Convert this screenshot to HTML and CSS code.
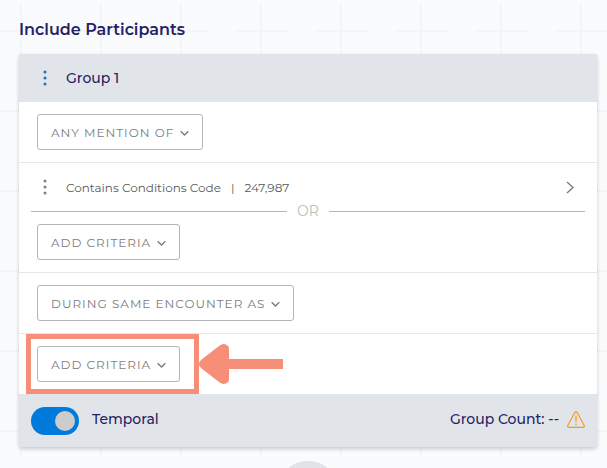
FILE: index.html
```html
<!DOCTYPE html>
<html lang="en">
<head>
    <meta charset="utf-8">
    <title>Include Participants</title>
    <link rel="stylesheet" href="styles.css">
</head>
<body>
    <main class="builder">
        <h2 class="title">Include Participants</h2>

        <section class="group">
            <header class="group-header">
                <button type="button" class="menu menu-blue" aria-label="Group menu">
                    <svg width="4" height="16" viewBox="0 0 4 16"><circle cx="2" cy="2" r="1.5"/><circle cx="2" cy="8" r="1.5"/><circle cx="2" cy="14" r="1.5"/></svg>
                </button>
                <h3 class="group-name">Group 1</h3>
            </header>

            <div class="row">
                <button type="button" class="drop">ANY MENTION OF
                    <svg class="chevron" width="9" height="8" viewBox="0 0 9 8"><path d="M.7 3.2l3.8 3.8 3.8-3.8"/></svg>
                </button>
            </div>

            <div class="row row-items">
                <div class="item">
                    <button type="button" class="menu" aria-label="Criteria menu">
                        <svg width="4" height="16" viewBox="0 0 4 16"><circle cx="2" cy="2" r="1.5"/><circle cx="2" cy="8" r="1.5"/><circle cx="2" cy="14" r="1.5"/></svg>
                    </button>
                    <span>Contains Conditions Code</span>
                    <span class="bar">|</span>
                    <span>247,987</span>
                    <button type="button" class="open" aria-label="Open criteria">
                        <svg class="chevron" width="8" height="13" viewBox="0 0 8 13"><path d="M1 1l6 5.5-6 5.5"/></svg>
                    </button>
                </div>
                <div class="or">OR</div>
                <button type="button" class="drop">ADD CRITERIA
                    <svg class="chevron" width="9" height="8" viewBox="0 0 9 8"><path d="M.7 3.2l3.8 3.8 3.8-3.8"/></svg>
                </button>
            </div>

            <div class="row">
                <button type="button" class="drop">DURING SAME ENCOUNTER AS
                    <svg class="chevron" width="9" height="8" viewBox="0 0 9 8"><path d="M.7 3.2l3.8 3.8 3.8-3.8"/></svg>
                </button>
            </div>

            <div class="row row-last">
                <div class="highlight">
                    <button type="button" class="drop">ADD CRITERIA
                        <svg class="chevron" width="9" height="8" viewBox="0 0 9 8"><path d="M.7 3.2l3.8 3.8 3.8-3.8"/></svg>
                    </button>
                </div>
                <svg class="arrow" width="84" height="40" viewBox="0 0 84 40"><path d="M2 16L20 2Q25-2 29 2Q30 3 30 5V15H84V25H30V35Q30 37 29 38Q25 42 20 38L2 24Q-2 20 2 16Z"/></svg>
            </div>

            <footer class="group-footer">
                <input type="checkbox" id="temporal" class="switch" checked>
                <label for="temporal">Temporal</label>
                <span class="count">Group Count: --</span>
                <svg class="warning" width="18" height="17" viewBox="0 0 18 17"><path d="M8 1.3Q9 0 10 1.3L17.2 14.5Q17.8 16.2 16 16.3H2Q.2 16.2.8 14.5Z"/><path class="mark" d="M9 4.5v6.5M9 12.5v2"/></svg>
            </footer>
        </section>

        <div class="next"></div>
    </main>
</body>
</html>
```
FILE: styles.css
```css
* { box-sizing: border-box; }
body {
    margin: 0;
    min-height: 100vh;
    font-family: Montserrat, Inter, sans-serif;
    color: #262262;
    background: #fafbfd url("data:image/svg+xml,%3Csvg xmlns='http://www.w3.org/2000/svg' width='80' height='80'%3E%3Cpath d='M40 13v53M13 40h54' stroke='%23f4f5f7' stroke-width='2'/%3E%3C/svg%3E") -19px -9px;
}
button { font: inherit; color: inherit; background: none; border: 0; padding: 0; }
svg { display: block; flex: none; }

.builder { padding: 18px 10px 0 19px; }
.title { margin: 0 0 12px; font-size: 16px; font-weight: 600; line-height: 24px; }

.group { background: #fff; border-radius: 0 0 3px 3px; box-shadow: 0 2px 4px rgba(0, 0, 0, 0.2); }
.group-header { display: flex; align-items: center; height: 48px; padding: 0 18px; background: #e1e5ea; }
.group-name { margin: 0; font-size: 14px; font-weight: 500; line-height: 20px; }
.menu { width: 16px; margin-right: 13px; fill: #808080; }
.menu svg { margin: 0 auto; }
.menu-blue { fill: #216fb4; }

.row { padding: 12px 18px; border-bottom: 1px solid #e7e7e7; }
.row-items { padding-top: 8px; }
.drop {
    display: flex;
    align-items: center;
    gap: 6px;
    height: 36px;
    padding: 0 13px;
    border: 1px solid #b5b5b5;
    border-radius: 3px;
    background: #fff;
    color: #7c7c7c;
    font-size: 12px;
    letter-spacing: 1px;
    white-space: nowrap;
}
.chevron { fill: none; stroke: #7c7c7c; stroke-width: 1.4; }

.item { display: flex; align-items: center; height: 32px; color: #5a5a5a; font-size: 12px; }
.bar { margin: 0 10px; }
.open { margin-left: auto; padding: 0 5px; }
.or { display: flex; align-items: center; gap: 10px; height: 16px; margin: 0 -6px 5px; color: #bdbdbd; font-size: 14px; }
.or::before, .or::after { content: ""; flex: 1; height: 1px; background: #b5b5b5; }

.row-last { display: flex; align-items: center; padding: 0 7px; border-bottom: 0; }
.highlight { padding: 7px 14px 7px 6px; border: 5px solid #f78e78; }
.arrow { fill: #f78e78; }

.group-footer { display: flex; align-items: center; height: 53px; padding: 0 12px; background: #e1e5ea; font-size: 14px; font-weight: 500; line-height: 20px; }
.group-footer label, .count { padding-bottom: 4px; }
.switch { appearance: none; width: 48px; height: 28px; margin: 0 13px 0 0; padding: 4px; border-radius: 14px; background: #ccc; }
.switch::before { content: ""; display: block; width: 20px; height: 20px; border-radius: 50%; background: #fff; }
.switch:checked { background: #007bdb; }
.switch:checked::before { margin-left: auto; background: #ccc; }
.count { margin-left: auto; }
.warning { margin: 0 0 2px 8px; fill: none; stroke: #f59b23; stroke-width: 1.2; }
.warning .mark { stroke: #f5b565; stroke-width: 2; }

.next { width: 64px; height: 64px; margin: 14px auto 0; border-radius: 50%; background: #e1e3e8; }

::-webkit-scrollbar { display: none; }
```
